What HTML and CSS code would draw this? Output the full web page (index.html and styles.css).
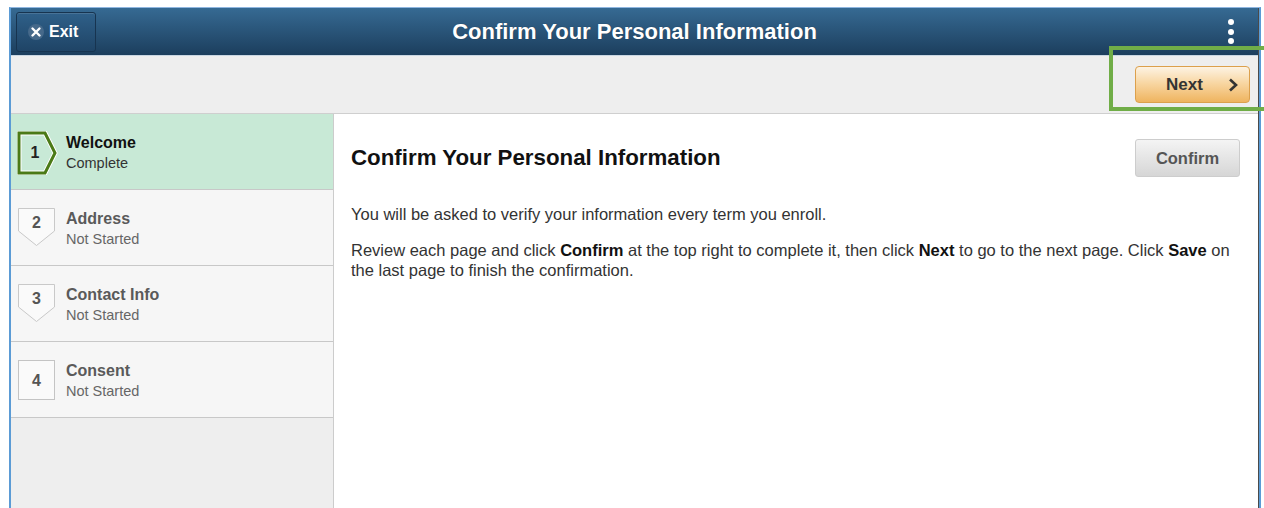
FILE: index.html
```html
<!DOCTYPE html>
<html lang="en">
<head>
<meta charset="utf-8">
<title>Confirm Your Personal Information</title>
<link rel="stylesheet" href="styles.css">
</head>
<body>
<div class="frame">
  <div class="app">
    <header class="banner">
      <button class="exit-btn" type="button">
        <span class="exit-icon">
          <svg width="14" height="14" viewBox="0 0 14 14"><path d="M3.5 3.5 L10.5 10.5 M10.5 3.5 L3.5 10.5" stroke="#fff" stroke-width="2.4" stroke-linecap="round"/></svg>
        </span>
        <span>Exit</span>
      </button>
      <h1 class="banner-title">Confirm Your Personal Information</h1>
      <button class="kebab" type="button" aria-label="Actions">
        <span></span><span></span><span></span>
      </button>
    </header>

    <div class="toolbar">
      <button class="next-btn" type="button">
        <span class="next-label">Next</span>
        <svg class="chev" width="12" height="16" viewBox="0 0 12 16"><path d="M3 2.5 L9 8 L3 13.5" fill="none" stroke="#333" stroke-width="2.6" stroke-linejoin="miter"/></svg>
      </button>
    </div>

    <div class="main">
      <nav class="steps">
        <div class="step step-done">
          <svg class="step-shape" width="42" height="44" viewBox="0 0 42 44">
            <path d="M2 2 H28 L38 22 L28 42 H2 Z" fill="none" stroke="#fff" stroke-width="5" stroke-linejoin="miter"/>
            <path d="M2 2 H28 L38 22 L28 42 H2 Z" fill="none" stroke="#4b7a17" stroke-width="3" stroke-linejoin="miter"/>
            <text x="18" y="27" text-anchor="middle" class="step-num-svg">1</text>
          </svg>
          <div class="step-text">
            <div class="step-title">Welcome</div>
            <div class="step-status">Complete</div>
          </div>
        </div>
        <div class="step">
          <svg class="step-shape" width="42" height="44" viewBox="0 0 42 44">
            <path d="M1.5 1.5 H37.5 V24 L19.5 38.5 L1.5 24 Z" fill="#fafafa" stroke="#c9c9c9" stroke-width="1"/>
            <text x="19.5" y="21" text-anchor="middle" class="step-num-svg">2</text>
          </svg>
          <div class="step-text">
            <div class="step-title">Address</div>
            <div class="step-status">Not Started</div>
          </div>
        </div>
        <div class="step">
          <svg class="step-shape" width="42" height="44" viewBox="0 0 42 44">
            <path d="M1.5 1.5 H37.5 V24 L19.5 38.5 L1.5 24 Z" fill="#fafafa" stroke="#c9c9c9" stroke-width="1"/>
            <text x="19.5" y="21" text-anchor="middle" class="step-num-svg">3</text>
          </svg>
          <div class="step-text">
            <div class="step-title">Contact Info</div>
            <div class="step-status">Not Started</div>
          </div>
        </div>
        <div class="step">
          <svg class="step-shape" width="42" height="44" viewBox="0 0 42 44">
            <rect x="1.5" y="1.5" width="36" height="39" fill="#fafafa" stroke="#c4c4c4" stroke-width="1"/>
            <text x="19.5" y="27" text-anchor="middle" class="step-num-svg">4</text>
          </svg>
          <div class="step-text">
            <div class="step-title">Consent</div>
            <div class="step-status">Not Started</div>
          </div>
        </div>
      </nav>

      <section class="content">
        <div class="content-head">
          <h2 class="content-title">Confirm Your Personal Information</h2>
          <button class="confirm-btn" type="button">Confirm</button>
        </div>
        <p>You will be asked to verify your information every term you enroll.</p>
        <p>Review each page and click <b>Confirm</b> at the top right to complete it, then click <b>Next</b> to go to the next page. Click <b>Save</b> on the last page to finish the confirmation.</p>
      </section>
    </div>
  </div>
</div>
<div class="callout" aria-hidden="true"></div>
</body>
</html>
```

FILE: styles.css
```css
html, body {
  margin: 0;
  padding: 0;
  background: #ffffff;
  overflow: hidden;
  height: 508px;
}

body {
  font-family: "Liberation Sans", Arial, sans-serif;
  color: #333;
  position: relative;
}

button {
  font-family: inherit;
  cursor: pointer;
}

.frame {
  margin: 7px 0 0 9px;
  width: 1248px;
  border-top: 1px solid #8fb6e0;
  border-left: 2px solid #5b9bd5;
  border-right: 2px solid #5b9bd5;
  height: 520px;
}

.app {
  height: 100%;
  border-right: 1px solid #4a4a4a;
  display: flex;
  flex-direction: column;
}

/* Banner */
.banner {
  height: 48px;
  flex: none;
  display: flex;
  align-items: center;
  position: relative;
  background: linear-gradient(#366a93, #1c3e5d);
  border-bottom: 1px solid #c9d6e2;
  box-sizing: border-box;
}

.exit-btn {
  margin-left: 5px;
  height: 40px;
  width: 80px;
  display: flex;
  align-items: center;
  gap: 5px;
  padding: 0 0 0 11px;
  border: 1px solid #173450;
  border-radius: 3px;
  background: linear-gradient(#2f6089, #1f4466);
  box-shadow: inset 0 1px 0 rgba(255,255,255,0.12);
  color: #fff;
  font-weight: bold;
  font-size: 16px;
}

.exit-icon {
  width: 16px;
  height: 16px;
  border-radius: 50%;
  background: #46698a;
  display: flex;
  align-items: center;
  justify-content: center;
}

.banner-title {
  position: absolute;
  left: 0;
  right: 0;
  margin: 0;
  text-align: center;
  color: #fff;
  font-size: 22px;
  font-weight: bold;
  pointer-events: none;
  text-shadow: 0 0 1px rgba(0,0,0,0.4);
}

.kebab {
  margin-left: auto;
  margin-right: 22px;
  width: 10px;
  height: 25px;
  padding: 0;
  border: 0;
  background: none;
  display: flex;
  flex-direction: column;
  align-items: center;
  justify-content: space-between;
}

.kebab span {
  width: 6px;
  height: 6px;
  border-radius: 50%;
  background: #fff;
}

/* Toolbar */
.toolbar {
  height: 58px;
  flex: none;
  box-sizing: border-box;
  background: #eeeeee;
  border-bottom: 1px solid #cfcfcf;
  display: flex;
  justify-content: flex-end;
  align-items: flex-start;
  padding: 10px 8px 0 0;
}

.next-btn {
  width: 115px;
  height: 37px;
  border: 1px solid #dca04c;
  border-radius: 4px;
  background: linear-gradient(#fdf3e3 0%, #f8d7a4 45%, #efb45f 100%);
  display: flex;
  align-items: center;
  padding: 0 10px 0 30px;
  box-sizing: border-box;
}

.next-label {
  font-size: 17px;
  font-weight: bold;
  color: #333;
}

.chev {
  margin-left: auto;
}

/* Main area */
.main {
  flex: 1;
  display: flex;
  min-height: 0;
}

.steps {
  width: 322px;
  flex: none;
  background: #eeeeee;
  border-right: 1px solid #cccccc;
}

.step {
  height: 76px;
  box-sizing: border-box;
  border-bottom: 1px solid #c8c8c8;
  background: #f6f6f6;
  display: flex;
  align-items: flex-start;
  padding: 17px 0 0 6px;
  gap: 7px;
}

.step-done {
  background: #c8e9d6;
}

.step-shape {
  flex: none;
  display: block;
}

.step-num-svg {
  font-family: "Liberation Sans", Arial, sans-serif;
  font-size: 16px;
  font-weight: bold;
  fill: #555;
}

.step-done .step-num-svg {
  fill: #222;
}

.step-text {
  padding-top: 2px;
}

.step-title {
  font-size: 16px;
  line-height: 20px;
  font-weight: bold;
  color: #5a5a5a;
}

.step-status {
  font-size: 14.5px;
  line-height: 20px;
  color: #666;
}

.step-done .step-title {
  color: #111;
}

.step-done .step-status {
  color: #333;
}

/* Content */
.content {
  flex: 1;
  background: #ffffff;
  padding: 24px 18px 0 17px;
  font-size: 16.5px;
  line-height: 20px;
  color: #333;
}

.content-head {
  display: flex;
  align-items: center;
  justify-content: space-between;
  height: 40px;
  margin-bottom: 26px;
}

.content-title {
  margin: 0;
  font-size: 22.3px;
  font-weight: bold;
  color: #111;
}

.confirm-btn {
  width: 105px;
  height: 38px;
  border: 1px solid #cdcdcd;
  border-radius: 3px;
  background: linear-gradient(#f4f4f4, #d6d6d6);
  color: #555;
  font-size: 16.5px;
  font-weight: bold;
}

.content p {
  margin: 0 0 16px 0;
}

.content b {
  color: #111;
}

/* Highlight annotation over the Next button */
.callout {
  position: absolute;
  left: 1109px;
  top: 46px;
  width: 170px;
  height: 57px;
  border: 4px solid #70ad47;
  pointer-events: none;
}
```
